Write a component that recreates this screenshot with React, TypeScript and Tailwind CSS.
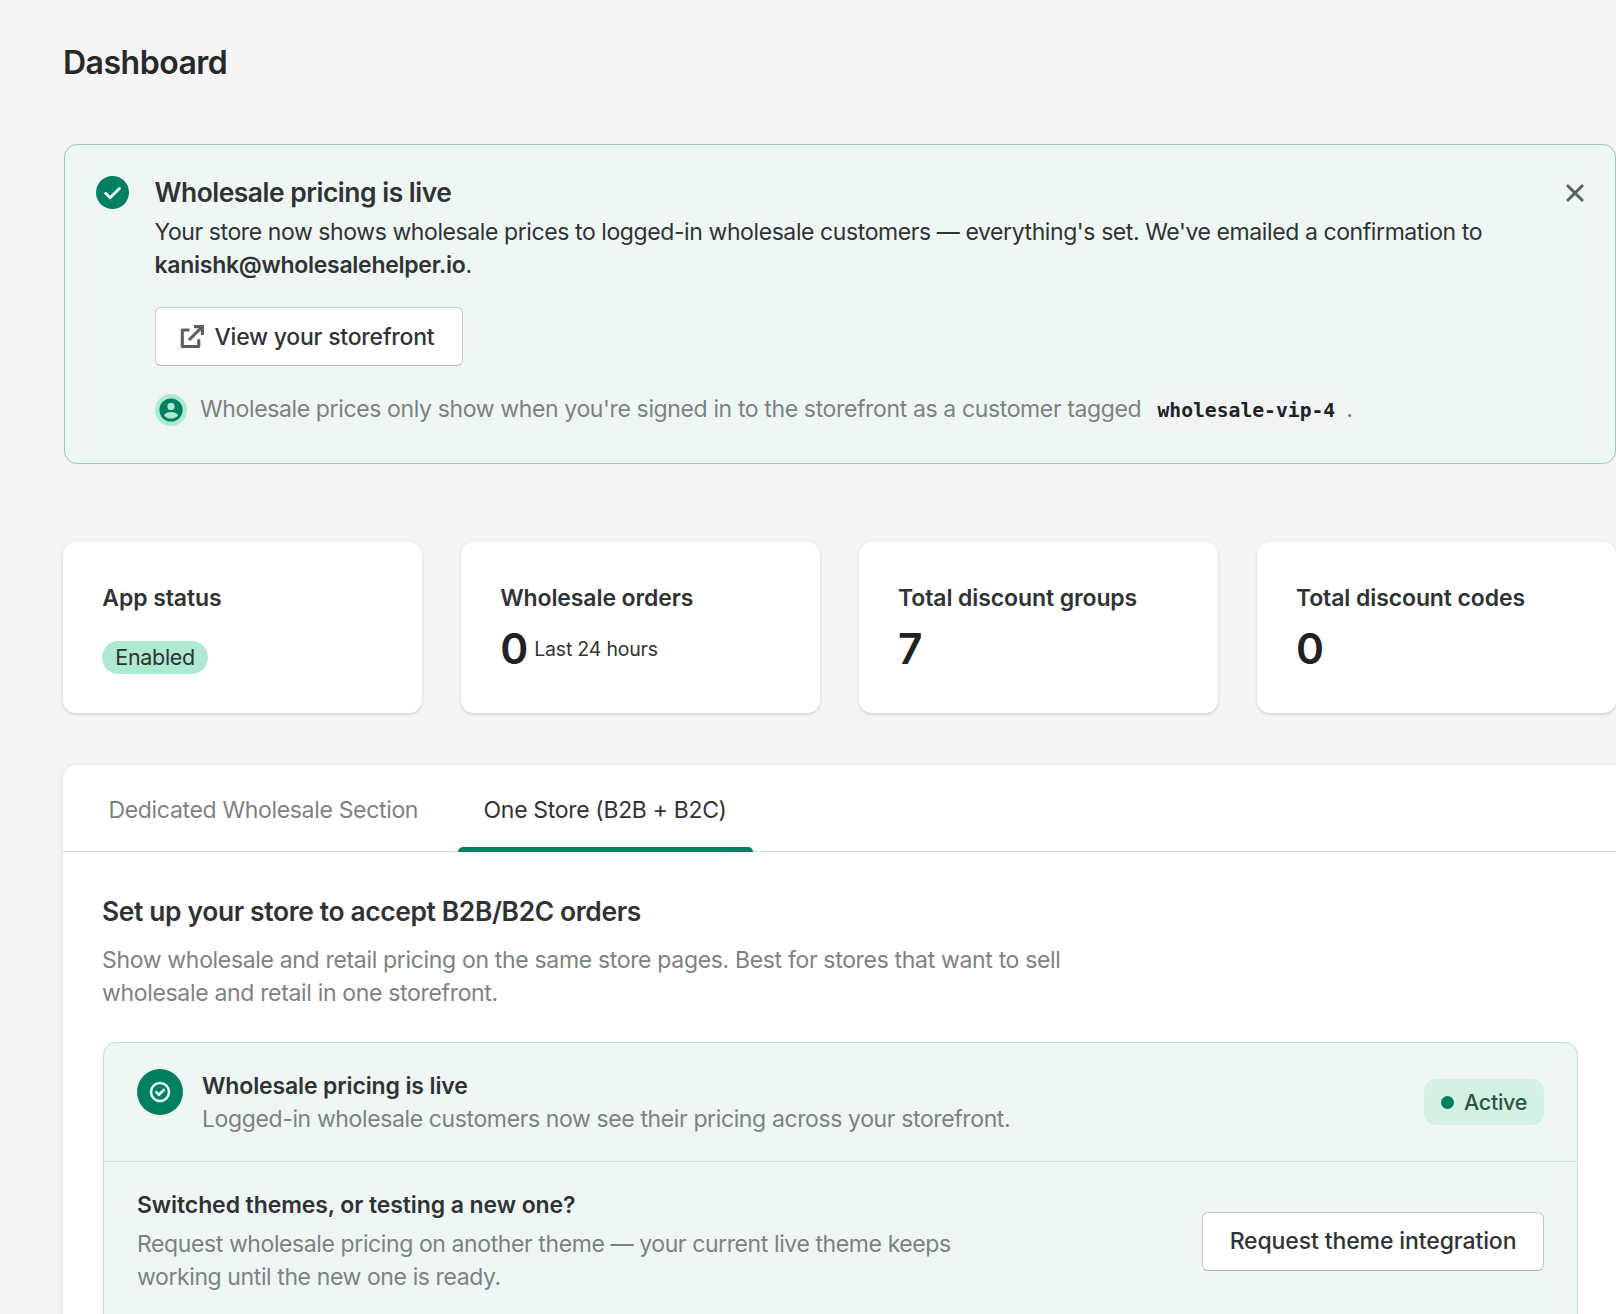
import type { ReactNode } from "react";

import clsx from "clsx";

type StatCardType = {
  title: string;
  children: ReactNode;
};

const tabs = [
  { id: "dedicated", label: "Dedicated Wholesale Section" },
  { id: "one-store", label: "One Store (B2B + B2C)" },
];

function CheckBadgeIcon() {
  return (
    <svg className="w-[33px] h-[33px] shrink-0" viewBox="0 0 33 33" fill="none">
      <circle cx="16.5" cy="16.5" r="16.5" fill="#008060" />
      <path
        d="M9.6 17.2l4.5 4.6 9.3-9.2"
        stroke="#f1f8f5"
        strokeWidth="2.8"
        strokeLinecap="round"
        strokeLinejoin="round"
      />
    </svg>
  );
}

function ExternalIcon() {
  return (
    <svg className="w-6 h-6 shrink-0" viewBox="0 0 24 24" fill="none">
      <path
        d="M9.5 5H2.3V21.5H18.8V14.3"
        stroke="#5c5f62"
        strokeWidth="3.1"
        strokeLinejoin="round"
      />
      <path d="M9 15L21 3" stroke="#5c5f62" strokeWidth="3.1" />
      <path d="M14 1.6H22.4V10" stroke="#5c5f62" strokeWidth="3.1" />
    </svg>
  );
}

function CustomerIcon() {
  return (
    <svg className="w-8 h-8 shrink-0" viewBox="0 0 32 32" fill="none">
      <circle cx="16" cy="16" r="16" fill="#aee9d1" />
      <circle cx="16" cy="16" r="11.6" fill="#007f5f" />
      <circle cx="16" cy="12.4" r="3.6" fill="#aee9d1" />
      <path
        d="M8.8 21.2C10.4 18.9 13 17.9 16 17.9s5.6 1 7.2 3.3c-1.7 2.3-4.3 3.4-7.2 3.4s-5.5-1.1-7.2-3.4z"
        fill="#aee9d1"
      />
    </svg>
  );
}

function LiveIcon() {
  return (
    <svg className="w-[46px] h-[46px] shrink-0" viewBox="0 0 46 46" fill="none">
      <circle cx="23" cy="23" r="23" fill="#008060" />
      <circle cx="23" cy="23" r="9" stroke="#e3f5ee" strokeWidth="2.6" />
      <path
        d="M19.4 23.2l2.6 2.6 4.8-4.8"
        stroke="#e3f5ee"
        strokeWidth="2.8"
        strokeLinecap="round"
        strokeLinejoin="round"
      />
    </svg>
  );
}

function CloseIcon() {
  return (
    <svg className="w-[18px] h-[18px]" viewBox="0 0 18 18" fill="none">
      <path
        d="M2 2l14 14M16 2L2 16"
        stroke="#5c6361"
        strokeWidth="3.1"
        strokeLinecap="round"
      />
    </svg>
  );
}

function StatCard(props: StatCardType) {
  const { title, children } = props;

  return (
    <div className="flex-1 h-[171px] pt-10 pl-[39.3px] bg-white rounded-[13px] shadow-[0_2px_3px_rgba(0,0,0,0.1),0_0_4px_rgba(23,24,24,0.05)]">
      <h3 className="font-semibold tracking-[-0.1px]">{title}</h3>
      {children}
    </div>
  );
}

function LiveBanner() {
  return (
    <section className="flex h-80 mt-[62px] ml-px pt-[31px] px-[31px] bg-[#eff7f5] border border-[#9cc7ba] rounded-[13px]">
      <CheckBadgeIcon />
      <div className="grow ml-[25.5px]">
        <h2 className="text-[26.4px] font-semibold tracking-[-0.47px]">
          Wholesale pricing is live
        </h2>
        <p className="mt-[7px] tracking-[-0.41px]">
          Your store now shows wholesale prices to logged-in wholesale customers
          — everything's set. We've emailed a confirmation to
          <br />
          <span className="font-semibold tracking-[-0.28px]">
            kanishk@wholesalehelper.io
          </span>
          .
        </p>
        <button
          type="button"
          className="flex items-center gap-[11px] h-[59px] w-[308px] mt-[25px] pt-px pl-[24px] bg-white border border-[#c3c9c7] border-b-[#aeb4b2] rounded-md font-medium tracking-[-0.23px]"
        >
          <ExternalIcon />
          View your storefront
        </button>
        <div className="flex items-center gap-[13.5px] mt-[27px] text-[#7b8382] tracking-[-0.37px]">
          <CustomerIcon />
          <p>
            Wholesale prices only show when you're signed in to the storefront
            as a customer tagged{" "}
            <code className="ml-[2px] mr-[-3px] px-2 py-[5px] bg-[#f1f3f5] rounded-md font-['DejaVu_Sans_Mono',monospace] text-[19.7px] font-bold tracking-normal text-[#202223]">
              wholesale-vip-4
            </code>{" "}
            .
          </p>
        </div>
      </div>
      <button type="button" className="self-start mt-[8px]">
        <CloseIcon />
      </button>
    </section>
  );
}

function App() {
  const activeTab = "one-store";

  return (
    <main className="w-[1616px] h-[1314px] overflow-hidden pl-[63px] pt-[43px] bg-[#f5f5f5] font-['Inter',sans-serif] text-[23px] leading-[33px] text-[#303334]">
      <h1 className="text-[32px] leading-[39px] font-semibold tracking-[-0.5px] text-[#26282a]">
        Dashboard
      </h1>

      <LiveBanner />

      <div className="flex gap-[38.5px] mt-[78px]">
        <StatCard title="App status">
          <span className="inline-block h-[33px] mt-[26px] px-[13px] bg-[#aee9d1] rounded-full text-[21.5px] tracking-[-0.3px]">
            Enabled
          </span>
        </StatCard>
        <StatCard title="Wholesale orders">
          <div className="flex items-center gap-[6px] h-[50px] mt-[8px]">
            <span className="text-[42.5px] font-semibold text-[#202223]">
              0
            </span>
            <span className="pt-0.5 text-[19.5px] tracking-[-0.2px]">
              Last 24 hours
            </span>
          </div>
        </StatCard>
        <StatCard title="Total discount groups">
          <div className="flex items-center h-[50px] mt-[8px] text-[42.5px] font-semibold text-[#202223]">
            7
          </div>
        </StatCard>
        <StatCard title="Total discount codes">
          <div className="flex items-center h-[50px] mt-[8px] text-[42.5px] font-semibold text-[#202223]">
            0
          </div>
        </StatCard>
      </div>

      <section className="h-[600px] mt-[52px] bg-white rounded-tl-[13px] shadow-[0_0_4px_rgba(23,24,24,0.1)]">
        <div className="flex h-[87px] pl-[19.5px] border-b border-[#dcdfe1]">
          {tabs.map((tab) => (
            <button
              key={tab.id}
              type="button"
              className={clsx(
                "relative flex px-[26px] pt-[29px] tracking-[-0.33px]",
                tab.id === activeTab ? "ml-[13.5px]" : "text-[#7b8382]"
              )}
            >
              {tab.label}
              {tab.id === activeTab && (
                <span className="absolute left-0 right-0 bottom-[-1px] h-[5px] bg-[#007f5f] rounded-t-[5px]" />
              )}
            </button>
          ))}
        </div>

        <div className="pt-[43px] pl-10 pr-[38px]">
          <h2 className="ml-[-1px] text-[26.4px] font-semibold tracking-[-0.36px]">
            Set up your store to accept B2B/B2C orders
          </h2>
          <p className="w-[980px] ml-[-1px] mt-[16px] text-[#7b8382] tracking-[-0.33px]">
            Show wholesale and retail pricing on the same store pages. Best for
            stores that want to sell
            <br />
            wholesale and retail in one storefront.
          </p>

          <div className="h-[400px] mt-8 bg-[#eff7f5] border border-[#bfded3] rounded-[13px]">
            <div className="flex h-[119px] pt-[26px] px-[33px] border-b border-[#d5e5e0]">
              <LiveIcon />
              <div className="grow ml-[19px] pt-px">
                <h3 className="font-semibold tracking-[-0.13px]">
                  Wholesale pricing is live
                </h3>
                <p className="text-[#7b8382] tracking-[-0.38px]">
                  Logged-in wholesale customers now see their pricing across
                  your storefront.
                </p>
              </div>
              <div className="flex items-center gap-[10px] h-[46px] w-[120px] mt-[10px] pl-[17px] bg-[#d4f1e4] rounded-xl text-[21.5px] font-medium tracking-[-0.3px] text-[#2b5548]">
                <span className="w-[13px] h-[13px] bg-[#007f5f] rounded-full" />
                Active
              </div>
            </div>

            <div className="flex px-[33px] pt-[27px]">
              <div className="grow">
                <h3 className="font-semibold tracking-[-0.09px]">
                  Switched themes, or testing a new one?
                </h3>
                <p className="mt-[6px] text-[#7b8382] tracking-[-0.4px]">
                  Request wholesale pricing on another theme — your current live
                  theme keeps
                  <br />
                  working until the new one is ready.
                </p>
              </div>
              <button
                type="button"
                className="w-[342px] h-[59px] mt-[23px] bg-white border border-[#c3c9c7] border-b-[#aeb4b2] rounded-md font-medium tracking-[-0.11px]"
              >
                Request theme integration
              </button>
            </div>
          </div>
        </div>
      </section>
    </main>
  );
}

export default App;
